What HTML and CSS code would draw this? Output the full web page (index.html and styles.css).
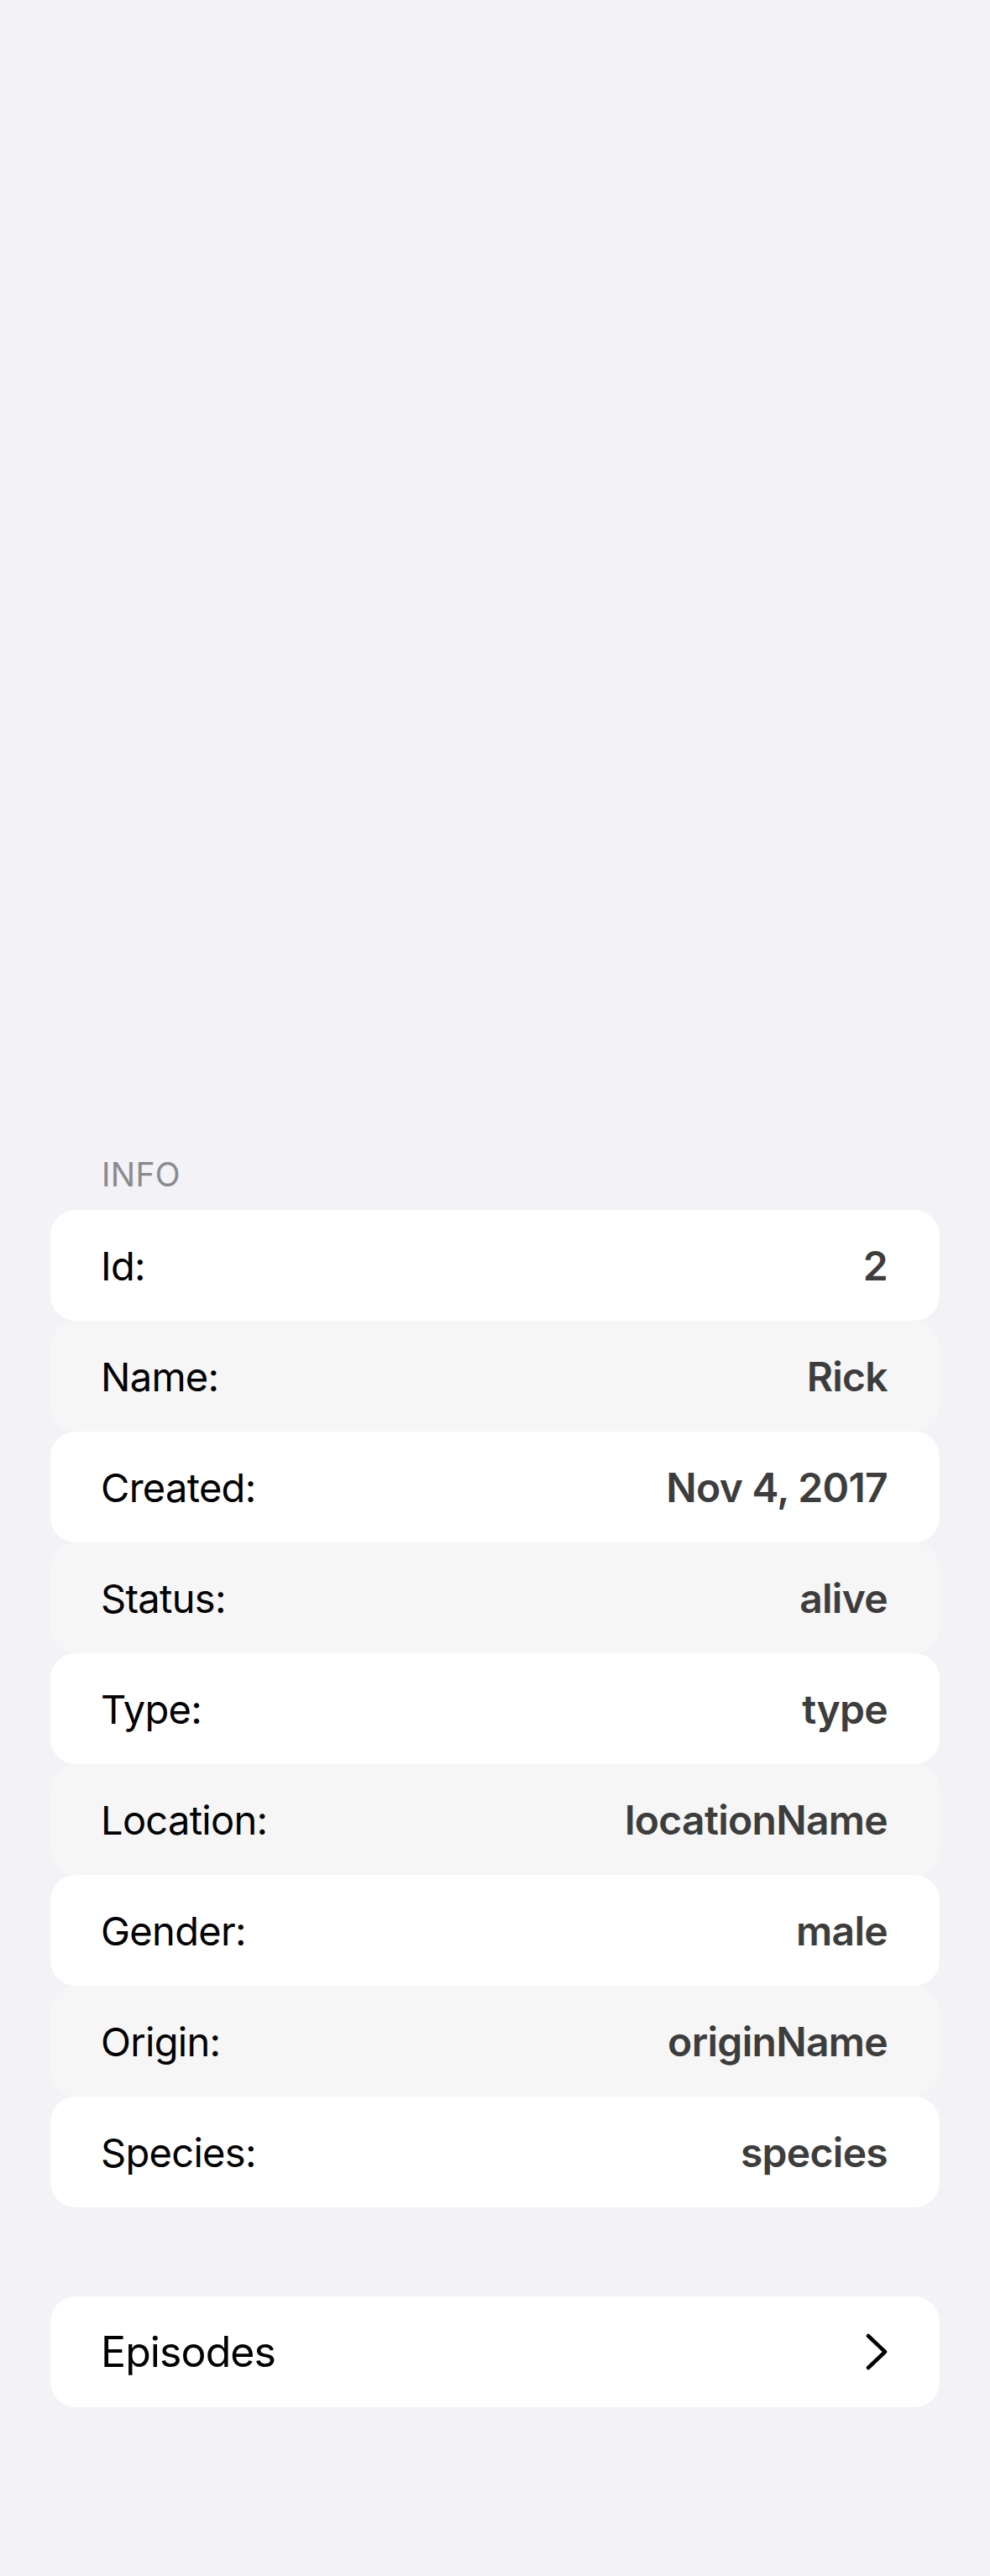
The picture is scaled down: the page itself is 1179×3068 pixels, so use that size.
FILE: index.html
```html
<!DOCTYPE html>
<html lang="en">
<head>
<meta charset="utf-8">
<title>Character</title>
<link rel="stylesheet" href="styles.css">
</head>
<body>
<main class="page">
  <div class="top-space"></div>
  <section class="section">
    <h2 class="section-header">INFO</h2>
    <div class="list">
      <div class="row"><span class="label">Id:</span><span class="value">2</span></div>
      <div class="row alt"><span class="label">Name:</span><span class="value">Rick</span></div>
      <div class="row"><span class="label">Created:</span><span class="value">Nov 4, 2017</span></div>
      <div class="row alt"><span class="label">Status:</span><span class="value">alive</span></div>
      <div class="row"><span class="label">Type:</span><span class="value">type</span></div>
      <div class="row alt"><span class="label">Location:</span><span class="value">locationName</span></div>
      <div class="row"><span class="label">Gender:</span><span class="value">male</span></div>
      <div class="row alt"><span class="label">Origin:</span><span class="value">originName</span></div>
      <div class="row"><span class="label">Species:</span><span class="value">species</span></div>
    </div>
  </section>
  <section class="section nav-section">
    <div class="row nav-row">
      <span class="nav-label">Episodes</span>
      <svg class="chevron" width="26" height="44" viewBox="0 0 26 44" aria-hidden="true">
        <path d="M3 3 L23 22 L3 41" fill="none" stroke="#000" stroke-width="4.5" stroke-linecap="round" stroke-linejoin="round"/>
      </svg>
    </div>
  </section>
</main>
</body>
</html>
```
FILE: styles.css
```css
html, body {
  margin: 0;
  padding: 0;
  background: #f2f2f7;
}
body {
  font-family: Inter, "Noto Sans", "Liberation Sans", sans-serif;
  color: #000;
  min-height: 3068px;
}
.page {
  display: flex;
  flex-direction: column;
}
.top-space {
  height: 1375px;
}
.section-header {
  margin: 0 0 19px 0;
  padding-left: 121px;
  font-size: 39px;
  line-height: 47px;
  font-weight: 400;
  color: #8a8a8e;
  letter-spacing: 0.3px;
}
.list {
  display: flex;
  flex-direction: column;
  margin: 0 60px;
}
.row {
  height: 132px;
  box-sizing: border-box;
  display: flex;
  align-items: center;
  justify-content: space-between;
  padding: 0 62px 0 60px;
  background: #ffffff;
  border-radius: 30px;
}
.row.alt {
  background: #f6f6f6;
}
.label {
  font-size: 47px;
  font-weight: 400;
  color: #000;
  letter-spacing: -0.7px;
}
.value {
  font-size: 48px;
  font-weight: 600;
  color: #3d3d3d;
  letter-spacing: -0.7px;
}
.nav-section {
  margin: 106px 60px 0;
}
.nav-row {
  padding-right: 62px;
}
.nav-label {
  font-size: 50px;
  font-weight: 400;
  letter-spacing: -0.9px;
}
.chevron {
  display: block;
}
```
